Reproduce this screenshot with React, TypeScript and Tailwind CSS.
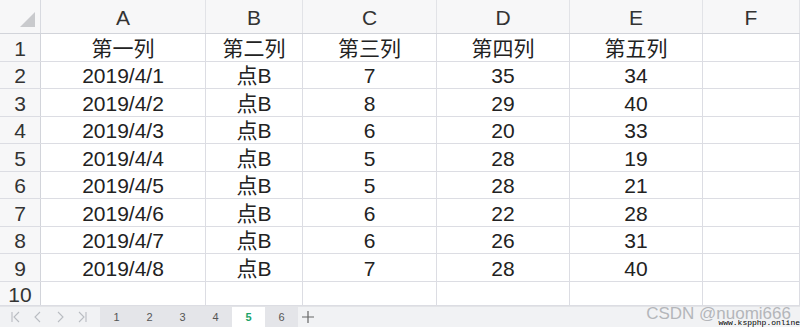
const cols = ['A', 'B', 'C', 'D', 'E', 'F']
const widths = ['w-[165px]', 'w-[97px]', 'w-[134px]', 'w-[133px]', 'w-[133px]', 'w-[97px]']

const rows: string[][] = [
  ['第一列', '第二列', '第三列', '第四列', '第五列', ''],
  ['2019/4/1', '点B', '7', '35', '34', ''],
  ['2019/4/2', '点B', '8', '29', '40', ''],
  ['2019/4/3', '点B', '6', '20', '33', ''],
  ['2019/4/4', '点B', '5', '28', '19', ''],
  ['2019/4/5', '点B', '5', '28', '21', ''],
  ['2019/4/6', '点B', '6', '22', '28', ''],
  ['2019/4/7', '点B', '6', '26', '31', ''],
  ['2019/4/8', '点B', '7', '28', '40', ''],
  ['', '', '', '', '', ''],
]

const rowHeights = ['h-[28px]', 'h-[27px]', 'h-[28px]', 'h-[27px]', 'h-[28px]', 'h-[27px]', 'h-[28px]', 'h-[27px]', 'h-[28px]', 'h-[24px]']

function NavIcon({ kind }: { kind: 'first' | 'prev' | 'next' | 'last' }) {
  return (
    <svg width="14" height="14" viewBox="0 0 14 14" fill="none" stroke="#b9bcc2" strokeWidth="1.1">
      {kind === 'first' && (
        <>
          <path d="M3 2v10" />
          <path d="M10 2 5 7l5 5" />
        </>
      )}
      {kind === 'prev' && <path d="M9 2 4 7l5 5" />}
      {kind === 'next' && <path d="M5 2l5 5-5 5" />}
      {kind === 'last' && (
        <>
          <path d="M4 2l5 5-5 5" />
          <path d="M11 2v10" />
        </>
      )}
    </svg>
  )
}

function App() {
  return (
    <div
      className="relative flex h-[327px] w-[800px] flex-col overflow-hidden bg-white text-[#222]"
      style={{ fontFamily: '"Liberation Sans", "Noto Sans CJK SC", sans-serif' }}
    >
      {/* column header */}
      <div className="flex h-[34px] shrink-0 border-b border-[#d2d4da] bg-[#f7f7f8]">
        <div className="flex w-[41px] items-end justify-end border-r border-[#d8dae0] pb-[6px] pr-[5px]">
          <svg width="15" height="15" viewBox="0 0 15 15">
            <path d="M15 0v15H0z" fill="#c9cacd" />
          </svg>
        </div>
        {cols.map((c, i) => (
          <div
            key={c}
            className={`${widths[i]} flex items-center justify-center border-r border-[#e2e3e7] pt-[2px] text-[21px] text-[#333]`}
          >
            {c}
          </div>
        ))}
      </div>

      {rows.map((r, ri) => (
        <div key={ri} className={`flex ${rowHeights[ri]} shrink-0 border-b border-[#dcdde3]`}>
          <div className="flex w-[41px] items-center justify-center border-r border-[#d2d4da] bg-[#f7f7f8] pt-[1px] text-[21px] leading-none text-[#333]">
            {ri + 1}
          </div>
          {r.map((v, ci) => (
            <div
              key={ci}
              className={`${widths[ci]} flex items-center justify-center border-r border-[#dcdde3] pt-[1px] text-[21px] leading-none`}
            >
              {v}
            </div>
          ))}
        </div>
      ))}

      {/* sheet tabs */}
      <div className="flex h-[21px] shrink-0 items-center border-t border-[#e3e4e7] bg-[#f1f2f4]">
        <div className="flex w-[100px] items-center gap-[8px] pl-[9px]">
          <NavIcon kind="first" />
          <NavIcon kind="prev" />
          <NavIcon kind="next" />
          <NavIcon kind="last" />
        </div>
        {['1', '2', '3', '4', '5', '6'].map((t) => (
          <div
            key={t}
            className={`flex h-full w-[33px] items-center justify-center text-[11px] ${
              t === '5' ? 'bg-white font-bold text-[#1ba46a]' : 'bg-[#e4e5e9] text-[#555]'
            }`}
          >
            {t}
          </div>
        ))}
        <div className="flex h-full w-[20px] items-center justify-center">
          <svg width="12" height="12" viewBox="0 0 12 12" stroke="#666" strokeWidth="1.2">
            <path d="M6 0v12M0 6h12" />
          </svg>
        </div>
      </div>

      {/* watermark */}
      <div className="absolute right-[9px] top-[305px] text-[17px] leading-none text-[#b4b6ba]">CSDN @nuomi666</div>
      <div
        className="absolute right-0 top-[319px] text-[8px] leading-none text-black"
        style={{ fontFamily: '"Liberation Mono", monospace' }}
      >
        www.kspphp.online
      </div>
    </div>
  )
}

export default App
